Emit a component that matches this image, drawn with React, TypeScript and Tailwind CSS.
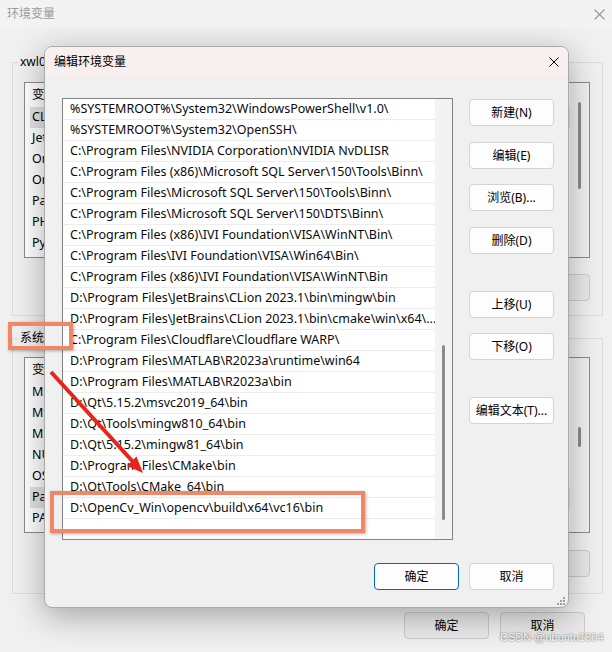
import clsx from "clsx";

const paths = [
  "%SYSTEMROOT%\\System32\\WindowsPowerShell\\v1.0\\",
  "%SYSTEMROOT%\\System32\\OpenSSH\\",
  "C:\\Program Files\\NVIDIA Corporation\\NVIDIA NvDLISR",
  "C:\\Program Files (x86)\\Microsoft SQL Server\\150\\Tools\\Binn\\",
  "C:\\Program Files\\Microsoft SQL Server\\150\\Tools\\Binn\\",
  "C:\\Program Files\\Microsoft SQL Server\\150\\DTS\\Binn\\",
  "C:\\Program Files (x86)\\IVI Foundation\\VISA\\WinNT\\Bin\\",
  "C:\\Program Files\\IVI Foundation\\VISA\\Win64\\Bin\\",
  "C:\\Program Files (x86)\\IVI Foundation\\VISA\\WinNT\\Bin",
  "D:\\Program Files\\JetBrains\\CLion 2023.1\\bin\\mingw\\bin",
  "D:\\Program Files\\JetBrains\\CLion 2023.1\\bin\\cmake\\win\\x64\\...",
  "C:\\Program Files\\Cloudflare\\Cloudflare WARP\\",
  "D:\\Program Files\\MATLAB\\R2023a\\runtime\\win64",
  "D:\\Program Files\\MATLAB\\R2023a\\bin",
  "D:\\Qt\\5.15.2\\msvc2019_64\\bin",
  "D:\\Qt\\Tools\\mingw810_64\\bin",
  "D:\\Qt\\5.15.2\\mingw81_64\\bin",
  "D:\\Program Files\\CMake\\bin",
  "D:\\Qt\\Tools\\CMake_64\\bin",
  "D:\\OpenCv_Win\\opencv\\build\\x64\\vc16\\bin",
];

const userVars = ["CLION", "JetBrains Gateway", "OneDrive", "OneDriveConsumer", "Path", "PHPSTORM", "PyCharm"];
const sysVars = ["MSMPI_BENCHMARKS", "MSMPI_BIN", "MSMPI_INC", "NUMBER_OF_PROCESSORS", "OS", "Path", "PATHEXT"];

const XIcon = ({ className }: { className?: string }) => (
  <svg viewBox="0 0 10 10" className={className} fill="none" stroke="currentColor" strokeWidth="1">
    <path d="M0.5 0.5L9.5 9.5M9.5 0.5L0.5 9.5" />
  </svg>
);

interface BtnProps {
  children: React.ReactNode;
  primary?: boolean;
  dim?: boolean;
  className?: string;
}

const Btn = ({ children, primary, dim, className }: BtnProps) => (
  <button
    className={clsx(
      "h-[27px] w-[85px] rounded-[4px] border text-[12px] text-black",
      primary ? "border-[#0067c0]" : dim ? "border-[#cbcbcb]" : "border-[#d3d3d3]",
      dim ? "bg-[#e9e9e9]" : "bg-[#fdfdfd]",
      className
    )}
  >
    {children}
  </button>
);

interface BgListProps {
  items: string[];
  active: number;
  thumbTop: string;
  thumbH: string;
}

const BgList = ({ items, active, thumbTop, thumbH }: BgListProps) => (
  <div className="flex h-[176px] border border-[#8a8a8a] bg-white text-[12.5px]">
    <div className="flex-1">
      <div className="flex h-[24px] items-center pl-[7px]">
        <span className="w-[190px]">变量</span>
        <span>值</span>
      </div>
      {items.map((v, i) => (
        <div
          key={v}
          className={clsx("ml-[5px] flex h-[21px] items-center pl-[2px]", i === active && "bg-[#e3e3e3]")}
        >
          {v}
        </div>
      ))}
    </div>
    <div className="flex w-[19px] justify-center bg-[#f1f1f1]">
      <div className={clsx("w-[3px] rounded-full bg-[#8b8b8b]", thumbTop, thumbH)} />
    </div>
  </div>
);

export default function App() {
  return (
    <div className="relative h-[652px] w-[612px] overflow-hidden bg-[#f0f0f0] font-['Noto_Sans','Noto_Sans_CJK_SC',sans-serif] text-[12px] text-black">
      {/* background window: 环境变量 */}
      <div className="flex h-[28px] items-center justify-between bg-[#f3f3f3] pl-[7px] pr-[7px]">
        <span className="text-[#9a9a9a]">环境变量</span>
        <XIcon className="h-[11px] w-[11px] text-[#8a8a8a]" />
      </div>

      <div className="pl-[12px] pr-[9px] pt-[34px]">
        <div className="relative h-[254px] border border-[#dcdcdc] pl-[11px] pr-[12px] pt-[19px]">
          <span className="absolute left-[5px] top-[-9px] bg-[#f0f0f0] px-[2px] leading-[16px]">xwl0 的用户变量(U)</span>
          <BgList items={userVars} active={0} thumbTop="mt-[19px]" thumbH="h-[87px]" />
          <div className="mt-[16px] flex justify-end gap-[10px]">
            <Btn dim>新建(N)...</Btn>
            <Btn dim>编辑(E)...</Btn>
            <Btn dim>删除(D)</Btn>
          </div>
        </div>

        <div className="relative mt-[22px] h-[256px] border border-[#dcdcdc] pl-[11px] pr-[12px] pt-[18px]">
          <span className="absolute left-[5px] top-[-9px] bg-[#f0f0f0] px-[2px] leading-[16px]">系统变量(S)</span>
          <BgList items={sysVars} active={5} thumbTop="mt-[69px]" thumbH="h-[20px]" />
          <div className="mt-[17px] flex justify-end gap-[10px]">
            <Btn dim>新建(W)...</Btn>
            <Btn dim>编辑(I)...</Btn>
            <Btn dim>删除(L)</Btn>
          </div>
        </div>
      </div>

      <div className="mt-[18px] flex justify-end gap-[11px] pr-[27px]">
        <Btn dim>确定</Btn>
        <Btn dim>取消</Btn>
      </div>

      {/* dialog: 编辑环境变量 */}
      <div className="absolute left-[44px] top-[46px] flex h-[562px] w-[525px] flex-col overflow-hidden rounded-[8px] border border-[#a9a9a9] bg-[#f0f0f0] shadow-[0_8px_32px_rgba(0,0,0,0.32)]">
        <div className="flex h-[30px] items-center justify-between bg-[#f8efef] pl-[9px] pr-[9px]">
          <span>编辑环境变量</span>
          <XIcon className="h-[10px] w-[10px] text-black" />
        </div>

        <div className="flex pl-[17px] pt-[21px]">
          <div className="flex h-[442px] w-[391px] border border-[#838383] bg-white text-[12.5px] text-[#0a0a0a]">
            <div className="flex-1 overflow-hidden">
              {paths.map((p) => (
                <div key={p} className="flex h-[21px] items-center border-b border-[#ededed] pl-[7px] whitespace-nowrap">
                  {p}
                </div>
              ))}
            </div>
            <div className="flex w-[17px] justify-center bg-[#f3f3f3]">
              <div className="mt-[246px] h-[175px] w-[3px] rounded-full bg-[#8b8b8b]" />
            </div>
          </div>

          <div className="ml-[16px] flex flex-col pt-[1px]">
            <Btn>新建(N)</Btn>
            <Btn className="mt-[16px]">编辑(E)</Btn>
            <Btn className="mt-[15px]">浏览(B)...</Btn>
            <Btn className="mt-[16px]">删除(D)</Btn>
            <Btn className="mt-[37px]">上移(U)</Btn>
            <Btn className="mt-[15px]">下移(O)</Btn>
            <Btn className="mt-[37px]">编辑文本(T)...</Btn>
          </div>
        </div>

        <div className="mt-[23px] flex justify-end gap-[10px] pr-[14px]">
          <Btn primary>确定</Btn>
          <Btn>取消</Btn>
        </div>

        <svg className="absolute bottom-[2px] right-[3px] h-[8px] w-[8px]" viewBox="0 0 8 8" fill="#a3a3a3">
          <rect x="6" y="0" width="2" height="2" />
          <rect x="3" y="3" width="2" height="2" />
          <rect x="6" y="3" width="2" height="2" />
          <rect x="0" y="6" width="2" height="2" />
          <rect x="3" y="6" width="2" height="2" />
          <rect x="6" y="6" width="2" height="2" />
        </svg>
      </div>

      {/* annotations */}
      <div className="absolute left-[8px] top-[322px] h-[28px] w-[65px] border-4 border-[#f08866] shadow-[1px_1px_3px_rgba(0,0,0,0.3)]" />
      <div className="absolute left-[50px] top-[491px] h-[42px] w-[315px] border-4 border-[#f08866] shadow-[1px_1px_3px_rgba(0,0,0,0.3)]" />
      <svg className="pointer-events-none absolute left-0 top-0 h-[652px] w-[612px]" viewBox="0 0 612 652">
        <line x1="51" y1="372" x2="135" y2="464" stroke="#e8231b" strokeWidth="4" />
        <polygon points="143,473 127,466 136.5,456.5" fill="#e8231b" />
      </svg>

      <span className="absolute left-[500px] top-[630px] whitespace-nowrap font-['Liberation_Sans',sans-serif] text-[11px] leading-[14px] text-[#f7f7f7] [text-shadow:0_0_2px_rgba(0,0,0,0.7)]">
        CSDN @ubuntu1804
      </span>
    </div>
  );
}
